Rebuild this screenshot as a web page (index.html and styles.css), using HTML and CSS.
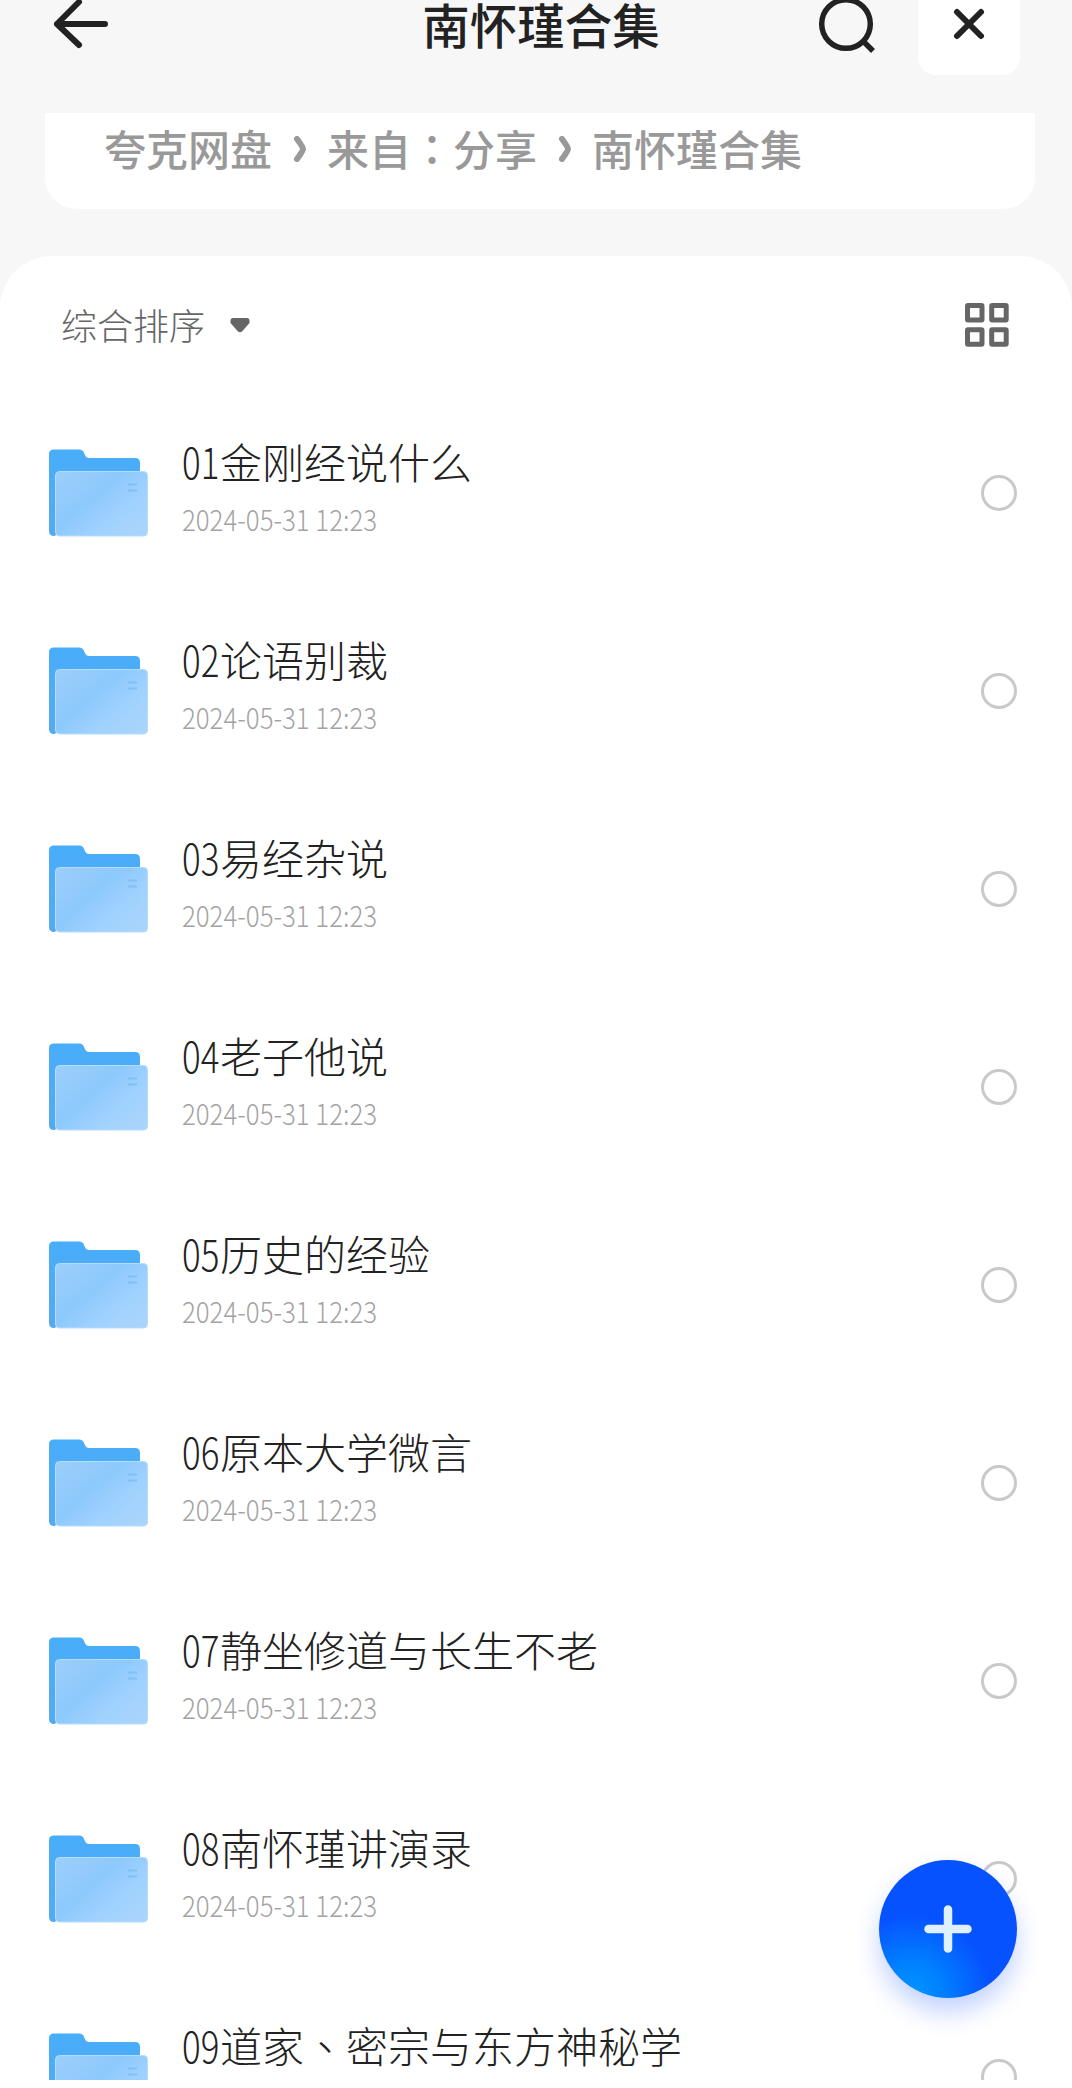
FILE: index.html
```html
<!DOCTYPE html>
<html lang="zh-CN">
<head>
<meta charset="utf-8">
<title>南怀瑾合集</title>
<link rel="stylesheet" href="styles.css">
</head>
<body>
<svg width="0" height="0" class="defs">
  <defs>
    <linearGradient id="back" x1="0" y1="0" x2="0" y2="1"><stop offset="0" stop-color="#48adfa"/><stop offset="1" stop-color="#55aaf0"/></linearGradient>
    <linearGradient id="front" x1="0" y1="0.1" x2="1" y2="0.9"><stop offset="0" stop-color="#9bcefa"/><stop offset="0.4" stop-color="#8dc9fc"/><stop offset="0.7" stop-color="#a0d2ff"/><stop offset="1" stop-color="#aad4fb"/></linearGradient>
    <symbol id="folder" viewBox="0 0 99 88">
      <path d="M0 5Q0 .5 5 .5H30Q34 .5 35 4L36.500 7Q37.500 9 40 9H86Q91 9 91 14V50H30L6 87H5Q0 87 0 82Z" fill="url(#back)"/>
      <rect x="6.500" y="22.500" width="92" height="64.500" rx="4" fill="url(#front)" stroke="#b4dcff" stroke-width="1"/>
      <path d="M79 35.500H88M79 41.500H88" stroke="#7fc0f5" stroke-width="2"/>
    </symbol>
  </defs>
</svg>
<div class="screen">
  <header class="topbar">
    <svg class="back" width="56" height="54" viewBox="0 0 56 54"><path d="M26 5L4 27L26 48M4 27H52" fill="none" stroke="#222" stroke-width="6" stroke-linecap="round" stroke-linejoin="round"/></svg>
    <h1 class="title">南怀瑾合集</h1>
    <div class="actions">
      <svg class="search" width="60" height="60" viewBox="0 0 60 60"><circle cx="28" cy="30" r="24.300" fill="none" stroke="#222" stroke-width="5.500"/><path d="M45 47L55 57" stroke="#222" stroke-width="5.500"/></svg>
      <div class="close"><svg width="32" height="32" viewBox="0 0 32 32"><path d="M4 4L28 28M28 4L4 28" stroke="#222" stroke-width="6" stroke-linecap="round"/></svg></div>
    </div>
  </header>
  <nav class="crumbs">
    <span>夸克网盘</span>
    <svg class="chev" width="14" height="26" viewBox="0 0 14 26"><path d="M4 3Q10 11 10 13Q10 15 4 23" fill="none" stroke="#999" stroke-width="6" stroke-linecap="round"/></svg>
    <span>来自<span class="punct" lang="zh-TW">：</span>分享</span>
    <svg class="chev" width="14" height="26" viewBox="0 0 14 26"><path d="M4 3Q10 11 10 13Q10 15 4 23" fill="none" stroke="#999" stroke-width="6" stroke-linecap="round"/></svg>
    <span>南怀瑾合集</span>
  </nav>
  <main class="sheet">
    <div class="toolbar">
      <div class="sort"><span>综合排序</span><svg width="20" height="15" viewBox="0 0 20 15"><path d="M3 0H17Q19.500 0 19.500 3V5L12 13.500Q10 15 8 13.500L.5 5V3Q.5 0 3 0Z" fill="#666"/></svg></div>
      <svg width="44" height="44" viewBox="0 0 44 44" fill="none" stroke="#666" stroke-width="5"><rect x="2.500" y="2.500" width="14.500" height="14.500" rx=".5"/><rect x="26.700" y="2.500" width="14.500" height="14.500" rx=".5"/><rect x="2.500" y="26.700" width="14.500" height="14.500" rx=".5"/><rect x="26.700" y="26.700" width="14.500" height="14.500" rx=".5"/></svg>
    </div>
    <ul class="list">
      <li class="row"><svg class="folder"><use href="#folder"/></svg><div class="info"><div class="name"><span class="num">01</span>金刚经说什么</div><div class="date">2024-05-31 12:23</div></div><span class="radio"></span></li>
      <li class="row"><svg class="folder"><use href="#folder"/></svg><div class="info"><div class="name"><span class="num">02</span>论语别裁</div><div class="date">2024-05-31 12:23</div></div><span class="radio"></span></li>
      <li class="row"><svg class="folder"><use href="#folder"/></svg><div class="info"><div class="name"><span class="num">03</span>易经杂说</div><div class="date">2024-05-31 12:23</div></div><span class="radio"></span></li>
      <li class="row"><svg class="folder"><use href="#folder"/></svg><div class="info"><div class="name"><span class="num">04</span>老子他说</div><div class="date">2024-05-31 12:23</div></div><span class="radio"></span></li>
      <li class="row"><svg class="folder"><use href="#folder"/></svg><div class="info"><div class="name"><span class="num">05</span>历史的经验</div><div class="date">2024-05-31 12:23</div></div><span class="radio"></span></li>
      <li class="row"><svg class="folder"><use href="#folder"/></svg><div class="info"><div class="name"><span class="num">06</span>原本大学微言</div><div class="date">2024-05-31 12:23</div></div><span class="radio"></span></li>
      <li class="row"><svg class="folder"><use href="#folder"/></svg><div class="info"><div class="name"><span class="num">07</span>静坐修道与长生不老</div><div class="date">2024-05-31 12:23</div></div><span class="radio"></span></li>
      <li class="row"><svg class="folder"><use href="#folder"/></svg><div class="info"><div class="name"><span class="num">08</span>南怀瑾讲演录</div><div class="date">2024-05-31 12:23</div></div><span class="radio"></span></li>
      <li class="row"><svg class="folder"><use href="#folder"/></svg><div class="info"><div class="name"><span class="num">09</span>道家<span class="punct" lang="zh-TW">、</span>密宗与东方神秘学</div></div><span class="radio"></span></li>
    </ul>
  </main>
  <button class="fab" aria-label="添加"><svg width="48" height="48" viewBox="0 0 48 48"><path d="M4.500 24H43.500M24 4.500V43.500" stroke="#dff0ff" stroke-width="8.500" stroke-linecap="round"/></svg></button>
</div>
</body>
</html>
```
FILE: styles.css
```css
* { box-sizing: border-box; margin: 0; padding: 0; }
body {
  background: #f7f7f7;
  font-family: "Noto Sans CJK SC", sans-serif;
  color: #222;
}
svg { display: block; flex: none; }
.defs { position: absolute; }
.screen {
  position: relative;
  width: 1072px;
  height: 2088px;
  overflow: hidden;
  display: flex;
  flex-direction: column;
}
.topbar {
  height: 113px;
  flex: none;
  display: grid;
  grid-template-columns: 1fr auto 1fr;
  align-items: start;
  padding: 0 52px 0 53px;
}
.back { margin-top: -3px; }
.title {
  padding-left: 9px;
  font-size: 47.5px;
  line-height: 48px;
  font-weight: 500;
}
.actions { display: flex; justify-content: flex-end; }
.search { margin: -6px 40px 0 0; }
.close {
  width: 102px;
  height: 75px;
  padding: 8px 0 0 35px;
  background: #fff;
  border-radius: 0 0 18px 18px;
}
.crumbs {
  margin: 0 37px 0 45px;
  height: 96px;
  flex: none;
  padding: 0 0 28px 59px;
  display: flex;
  align-items: center;
  background: #fff;
  border-radius: 0 0 32px 32px;
  color: #999;
  font-size: 42px;
  font-weight: 500;
  white-space: nowrap;
}
.chev { margin: 3px 20.500px 0; }
.punct { font-family: "Noto Sans CJK TC", sans-serif; }
.sheet {
  margin-top: 47px;
  flex: 1;
  background: #fff;
  border-radius: 52px 52px 0 0;
}
.toolbar {
  height: 138px;
  padding: 0 63px 0 61px;
  display: flex;
  align-items: center;
  justify-content: space-between;
}
.sort {
  display: flex;
  align-items: center;
  gap: 25px;
  font-size: 36px;
  font-weight: 300;
  color: #666;
}
.sort span { margin-top: -3px; }
.list {
  list-style: none;
  height: 1686px;
  overflow: hidden;
}
.row {
  height: 198px;
  padding: 0 55px 0 49px;
  display: flex;
  align-items: center;
}
.folder { width: 99px; height: 88px; }
.info {
  flex: 1;
  height: 106px;
  margin-left: 34px;
  white-space: nowrap;
}
.name {
  font-size: 42px;
  line-height: 42px;
  font-weight: 300;
}
.num {
  display: inline-block;
  width: 38px;
  transform: scaleX(.83);
  transform-origin: 0 50%;
}
.date {
  width: max-content;
  margin-top: 20px;
  font-size: 29px;
  line-height: 32px;
  font-weight: 300;
  color: #a3a3a3;
  transform: scaleX(.89);
  transform-origin: 0 50%;
}
.radio {
  width: 36px;
  height: 36px;
  border: 3px solid #c9c9c9;
  border-radius: 50%;
}
.fab {
  position: absolute;
  left: 879px;
  top: 1860px;
  width: 138px;
  height: 138px;
  border: 0;
  border-radius: 50%;
  display: grid;
  place-items: center;
  background: radial-gradient(circle at 24% 96%, #0094ff 0, #0080ff 18%, #0752ff 46%);
  box-shadow: 0 14px 24px rgba(20, 80, 255, .25);
}
```
